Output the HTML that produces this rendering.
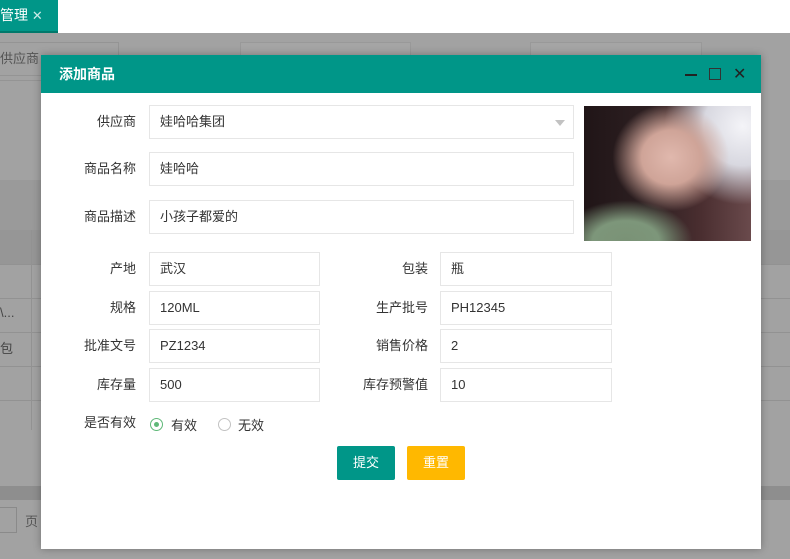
<!DOCTYPE html>
<html><head><meta charset="utf-8"><style>
*{margin:0;padding:0;box-sizing:border-box}
body{width:790px;height:559px;overflow:hidden;position:relative;background:#a2a2a2;font-family:"Liberation Sans","Noto Sans CJK SC",sans-serif;font-size:13px;color:#333}
.abs{position:absolute}
.top{left:0;top:0;width:790px;height:33px;background:#fff}
.tab{left:0;top:0;width:58px;height:33px;background:#009688;color:#fff;font-size:14px;line-height:31px;padding-left:0;border-bottom:2px solid #00796b}
.bgin{border:1px solid #999;background:#a5a5a5;height:34px}
.dlg{left:41px;top:55px;width:720px;height:494px;background:#fff;box-shadow:0 0 8px rgba(0,0,0,.3)}
.hd{left:0;top:0;width:720px;height:38px;background:#009688;color:#fff;font-size:14px;font-weight:600;line-height:38px;padding-left:18px}
.lab{text-align:right;width:80px;line-height:34px;color:#333}
.in{border:1px solid #e6e6e6;height:34px;line-height:32px;padding-left:10px;background:#fff}
.btn{height:34px;line-height:34px;width:58px;text-align:center;color:#fff;border-radius:2px}
</style></head><body>
<div class="abs top"></div>
<div class="abs tab">管理 <span style="font-size:13px;opacity:.8">✕</span></div>
<div class="abs" style="left:0;top:42px;font-size:13px;color:#555;line-height:34px">供应商</div>
<div class="abs bgin" style="left:-5px;top:42px;width:124px;background:transparent;border-color:#949494;border-left:none"></div>
<div class="abs bgin" style="left:240px;top:42px;width:171px"></div>
<div class="abs bgin" style="left:530px;top:42px;width:172px"></div>
<div class="abs" style="left:0;top:80px;width:41px;height:1px;background:#949494"></div>
<div class="abs" style="left:0;top:180px;width:790px;height:50px;background:#9a9a9a"></div>
<div class="abs" style="left:0;top:230px;width:790px;height:34px;background:#969696"></div>
<div class="abs" style="left:0;top:264px;width:790px;height:1px;background:#929292"></div>
<div class="abs" style="left:0;top:298px;width:790px;height:1px;background:#929292"></div>
<div class="abs" style="left:0;top:332px;width:790px;height:1px;background:#929292"></div>
<div class="abs" style="left:0;top:366px;width:790px;height:1px;background:#929292"></div>
<div class="abs" style="left:0;top:400px;width:790px;height:1px;background:#929292"></div>
<div class="abs" style="left:31px;top:230px;width:1px;height:200px;background:#929292"></div>
<div class="abs" style="left:0;top:305px;color:#444">\...</div>
<div class="abs" style="left:0;top:338px;color:#444">包</div>
<div class="abs" style="left:0;top:486px;width:790px;height:14px;background:#8e8e8e"></div>
<div class="abs" style="left:-2px;top:507px;width:19px;height:26px;border:1px solid #8a8a8a"></div>
<div class="abs" style="left:25px;top:511px;color:#555">页</div>
<div class="abs dlg">
<div class="abs hd">添加商品</div>
<div class="abs" style="left:644px;top:19px;width:12px;height:2px;background:#222"></div>
<div class="abs" style="left:668px;top:13px;width:12px;height:12px;border:1px solid #333"></div>
<div class="abs" style="left:692px;top:9px;color:#222;font-size:16px">✕</div>

<div class="abs lab" style="left:15px;top:50px">供应商</div>
<div class="abs in" style="left:108px;top:50px;width:425px">娃哈哈集团<span style="position:absolute;right:8px;top:14px;border:5px solid transparent;border-top:6px solid #c2c2c2"></span></div>
<div class="abs lab" style="left:15px;top:97px">商品名称</div>
<div class="abs in" style="left:108px;top:97px;width:425px">娃哈哈</div>
<div class="abs lab" style="left:15px;top:145px">商品描述</div>
<div class="abs in" style="left:108px;top:145px;width:425px">小孩子都爱的</div>

<div class="abs" style="left:543px;top:51px;width:167px;height:135px;overflow:hidden;background:radial-gradient(ellipse 35% 40% at 52% 38%,#e0b8ad 0,#cfa498 50%,transparent 100%),radial-gradient(circle at 95% 15%,#f4f4f8 0,#d8d8e0 20%,transparent 40%),radial-gradient(ellipse 40% 30% at 25% 100%,#7a9276 0,#7d967a 50%,transparent 100%),linear-gradient(90deg,#201517,#2e2022 40%,#4a2e30 70%,#6a4a4c)"></div>

<div class="abs lab" style="left:15px;top:197px">产地</div>
<div class="abs in" style="left:108px;top:197px;width:171px">武汉</div>
<div class="abs lab" style="left:307px;top:197px">包装</div>
<div class="abs in" style="left:399px;top:197px;width:172px">瓶</div>
<div class="abs lab" style="left:15px;top:236px">规格</div>
<div class="abs in" style="left:108px;top:236px;width:171px">120ML</div>
<div class="abs lab" style="left:307px;top:236px">生产批号</div>
<div class="abs in" style="left:399px;top:236px;width:172px">PH12345</div>
<div class="abs lab" style="left:15px;top:274px">批准文号</div>
<div class="abs in" style="left:108px;top:274px;width:171px">PZ1234</div>
<div class="abs lab" style="left:307px;top:274px">销售价格</div>
<div class="abs in" style="left:399px;top:274px;width:172px">2</div>
<div class="abs lab" style="left:15px;top:313px">库存量</div>
<div class="abs in" style="left:108px;top:313px;width:171px">500</div>
<div class="abs lab" style="left:307px;top:313px">库存预警值</div>
<div class="abs in" style="left:399px;top:313px;width:172px">10</div>

<div class="abs lab" style="left:15px;top:351px">是否有效</div>
<div class="abs" style="left:109px;top:363px;width:13px;height:13px;border:1px solid #5fb878;border-radius:50%"><div style="margin:3px;width:5px;height:5px;border-radius:50%;background:#5fb878"></div></div>
<div class="abs" style="left:130px;top:360px">有效</div>
<div class="abs" style="left:177px;top:363px;width:13px;height:13px;border:1px solid #c2c2c2;border-radius:50%"></div>
<div class="abs" style="left:197px;top:360px">无效</div>

<div class="abs btn" style="left:296px;top:391px;background:#009688">提交</div>
<div class="abs btn" style="left:366px;top:391px;background:#ffb800">重置</div>
</div>
</body></html>
